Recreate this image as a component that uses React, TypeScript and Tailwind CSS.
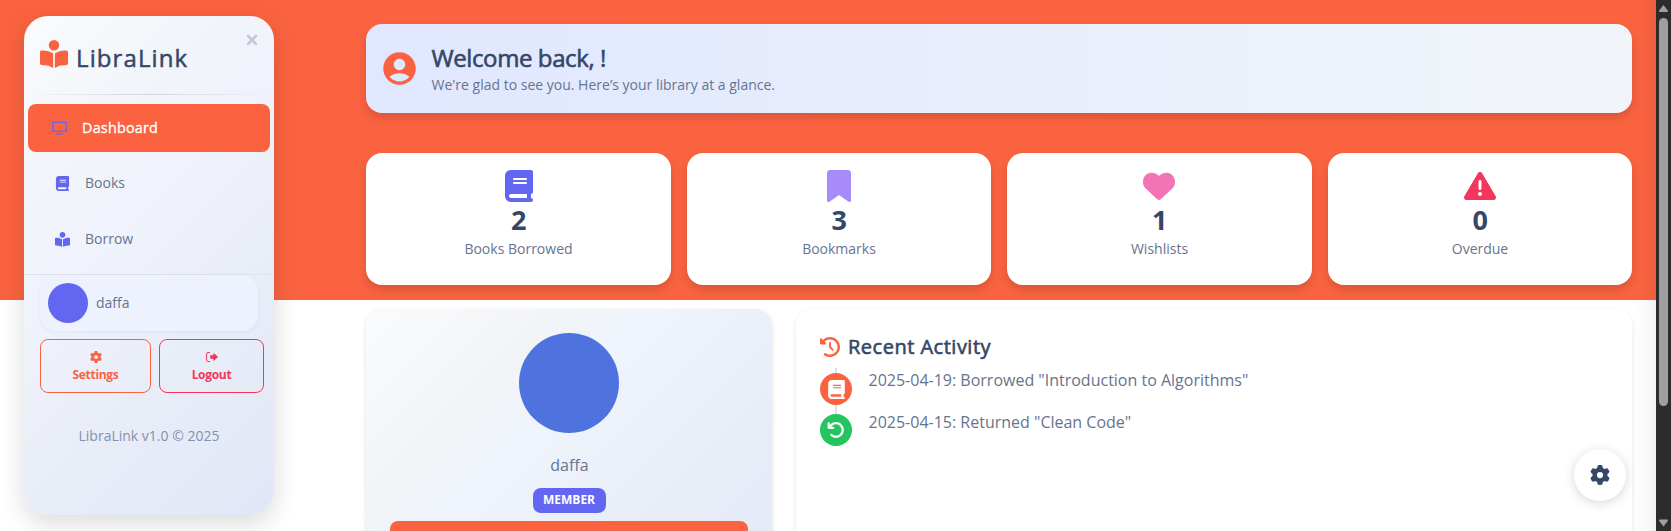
import React from "react";
import {
  FaArrowRotateLeft,
  FaBook,
  FaBookmark,
  FaBookOpenReader,
  FaClockRotateLeft,
  FaGear,
  FaHeart,
  FaTriangleExclamation,
  FaXmark,
} from "react-icons/fa6";
import { MdAccountCircle } from "react-icons/md";

const stats = [
  { icon: <FaBook size={32} className="ml-px text-[#6366f1]" />, value: 2, label: "Books Borrowed" },
  { icon: <FaBookmark size={32} className="text-[#a78bfa]" />, value: 3, label: "Bookmarks" },
  { icon: <FaHeart size={32} className="text-[#f472b6]" />, value: 1, label: "Wishlists" },
  { icon: <FaTriangleExclamation size={32} className="text-[#f5365c]" />, value: 0, label: "Overdue" },
];

function MonitorIcon() {
  return (
    <svg width="15" height="14" viewBox="0 0 15 14" fill="none" stroke="#6366f1" strokeOpacity="0.88">
      <path d="M.75 1.250h13.500v9H.75z" strokeWidth="1.5" />
      <path d="M4 12.900h7" strokeWidth="1.5" />
    </svg>
  );
}

function LogoutIcon() {
  return (
    <svg width="12" height="10" viewBox="0 0 12 10" fill="currentColor">
      <path d="M4 .5H2A1.400 1.400 0 0 0 .6 1.900v6.200A1.400 1.400 0 0 0 2 9.500h2" fill="none" stroke="currentColor" />
      <path d="M7.300 1.600v1.700H4.200v3.400h3.100v1.700q.3.700.9.200l3.400-3.100q.4-.5 0-1L8.200 1.400q-.6-.5-.9.200z" />
    </svg>
  );
}

function Sidebar() {
  return (
    <aside className="mt-4 ml-6 flex h-[499px] w-[250px] shrink-0 flex-col rounded-3xl bg-[linear-gradient(135deg,#fafbfd_0%,#f1f4f9_27%,#f0f3fc_40%,#e9edf7_65%,#e1e7f7_100%)] shadow-[0_8px_26px_rgba(0,0,0,0.15)]">
      <div className="flex h-[78px] justify-between">
        <div className="flex items-start pt-6 pl-4">
          <FaBookOpenReader size={28} className="text-[#fb6340]" />
          <span className="mt-0.5 ml-2 text-2xl leading-8 tracking-[1.1px] text-[#344767] [-webkit-text-stroke:0.5px]">LibraLink</span>
        </div>
        <FaXmark size={16} strokeWidth={24} stroke="currentColor" className="mt-4 mr-[14px] text-[#c0c8d6]" />
      </div>
      <div className="h-px bg-[linear-gradient(90deg,transparent,#d3d6db,transparent)]" />
      <nav className="mt-[9px] flex flex-col px-1 text-sm text-[#67748e]">
        <a className="flex h-12 items-center gap-[15px] rounded-lg bg-[#fb6340] pl-6 text-[14.4px] tracking-[0.2px] text-white [-webkit-text-stroke:0.3px]">
          <MonitorIcon />
          Dashboard
        </a>
        <a className="mt-[7px] flex h-12 items-center gap-[15px] pl-[27px]">
          <FaBook size={15} className="text-[#6366f1]" />
          Books
        </a>
        <a className="mt-2 flex h-12 items-center gap-[15px] pl-[27px]">
          <FaBookOpenReader size={15} className="text-[#6366f1]" />
          Borrow
        </a>
      </nav>
      <div className="mt-[11px] border-t border-[#dfe2e8] pl-4 text-[#67748e]">
        <div className="flex h-14 w-[218px] items-center gap-2 rounded-2xl bg-[#eef2ff] pl-2 text-sm shadow-[0_1px_4px_rgba(0,0,0,0.05)]">
          <span className="size-10 rounded-full bg-[#6366f1]" />
          daffa
        </div>
        <div className="mt-2 flex gap-2 text-xs leading-[18px] font-bold tracking-[-0.3px]">
          <button className="flex h-[54px] w-[111px] flex-col items-center rounded-lg border border-[#fb6340] pt-[11px] text-[#fb6340]">
            <FaGear size={12} />
            <span className="mt-[3px]">Settings</span>
          </button>
          <button className="flex h-[54px] w-[105px] flex-col items-center rounded-lg border border-[#f5365c] pt-3 text-[#f5365c]">
            <LogoutIcon />
            <span className="mt-1">Logout</span>
          </button>
        </div>
      </div>
      <div className="mt-8 text-center text-sm leading-[21px] text-[#8392ab]">LibraLink v1.0 © 2025</div>
    </aside>
  );
}

function Activity({ icon, text, tone, first }: { icon: React.ReactNode; text: string; tone: string; first?: boolean }) {
  return (
    <li className={first ? "flex h-[42px]" : "flex"}>
      <div className="flex w-8 flex-col items-center">
        <span className={first ? "h-[5px] w-0.5 bg-[#dee2e6]" : "h-[4px] w-0.5 bg-[#dee2e6]"} />
        <span className={`flex size-8 shrink-0 items-center justify-center rounded-full text-white ${tone}`}>{icon}</span>
        {first && <span className="w-0.5 grow bg-[#dee2e6]" />}
      </div>
      <span className="ml-[16.5px] text-base leading-6 text-[#67748e]">{text}</span>
    </li>
  );
}

export default function App() {
  return (
    <div className="flex h-[531px] overflow-hidden bg-[linear-gradient(#fb6340_300px,#fff_300px)] font-['Open_Sans',sans-serif]">
      <Sidebar />
      <main className="ml-[92px] flex w-[1266px] shrink-0 flex-col">
        <section className="mt-6 flex h-[89px] shrink-0 items-center rounded-2xl bg-[linear-gradient(90deg,#e0e7ff,#f1f5f9)] pl-[14px] shadow-[0_5px_10px_rgba(0,0,0,0.14)]">
          <MdAccountCircle size={39} className="text-[#fb6340]" />
          <div className="ml-[12.5px] pt-px">
            <h1 className="text-2xl leading-[30px] tracking-[-0.4px] text-[#344767] [-webkit-text-stroke:0.6px]">Welcome back, !</h1>
            <p className="mt-px text-sm leading-[21px] text-[#67748e]">We're glad to see you. Here’s your library at a glance.</p>
          </div>
        </section>
        <section className="mt-10 grid shrink-0 grid-cols-4 gap-4">
          {stats.map((s) => (
            <div
              key={s.label}
              className="flex h-[132px] flex-col items-center rounded-2xl bg-white pt-[17px] shadow-[0_5px_10px_rgba(0,0,0,0.14)]"
            >
              {s.icon}
              <span className="pl-px text-[27px] leading-9 font-bold text-[#344767]">{s.value}</span>
              <span className="mt-px pl-[0.5px] text-sm leading-5 text-[#67748e]">{s.label}</span>
            </div>
          ))}
        </section>
        <section className="mt-6 flex grow gap-6">
          <div className="flex h-[350px] w-[406px] shrink-0 flex-col items-center rounded-2xl bg-[linear-gradient(135deg,#fafbfd_0%,#f1f4f7_27%,#f0f4fc_36%,#e9edf7_65%,#e1e7f7_100%)] px-6 pt-6 shadow-[0_2px_5px_rgba(0,0,0,0.12)]">
            <span className="size-[100px] shrink-0 rounded-full bg-[#4e73df]" />
            <span className="mt-5 pl-px text-base leading-6 text-[#67748e]">daffa</span>
            <span className="mt-[11px] flex h-[25px] w-[73px] shrink-0 items-center justify-center rounded-lg bg-[#6366f1] pb-0.5 text-xs font-bold text-white">
              MEMBER
            </span>
            <button className="mt-2 h-10 w-full shrink-0 rounded-lg bg-[#fb6340] shadow-md" aria-label="Profile" />
          </div>
          <div className="h-[350px] grow rounded-2xl bg-white px-6 pt-6 shadow-[0_2px_5px_rgba(0,0,0,0.1)]">
            <h2 className="flex h-[27px] items-center gap-2 text-xl tracking-[0.5px] text-[#344767] [-webkit-text-stroke:0.6px]">
              <FaClockRotateLeft size={20} className="text-[#fb6340]" />
              Recent Activity
            </h2>
            <ul className="mt-2">
              <Activity first icon={<FaBook size={19} />} tone="bg-[#fb6340]" text={'2025-04-19: Borrowed "Introduction to Algorithms"'} />
              <Activity icon={<FaArrowRotateLeft size={18} />} tone="bg-[#22c55e]" text={'2025-04-15: Returned "Clean Code"'} />
            </ul>
          </div>
        </section>
      </main>
      <div className="w-6 shrink-0 bg-[linear-gradient(90deg,transparent,rgba(0,0,0,0.015)_50%,rgba(0,0,0,0.05))]" />
      <div className="flex h-full w-[15px] shrink-0 flex-col items-center bg-[#2c2c2c]">
        <svg width="9" height="8" viewBox="0 0 9 8" className="mt-[5px]" fill="#9f9f9f">
          <path d="M4.500 0 8.800 5.500Q9.200 7 8 7H1Q-.2 7 .2 5.500z" />
        </svg>
        <div className="mt-[5px] h-[388px] w-[9px] rounded-full bg-[#9f9f9f]" />
        <svg width="9" height="8" viewBox="0 0 9 8" className="mt-auto mb-1" fill="#9f9f9f">
          <path d="M4.500 7.500 8.800 2Q9.200.500 8 .500H1Q-.2.500.2 2z" />
        </svg>
      </div>
      <button
        aria-label="Configure"
        className="absolute top-[449px] left-[1574px] flex size-[52px] items-center justify-center rounded-full bg-white text-[#344767] shadow-[0_2px_12px_rgba(0,0,0,0.16)]"
      >
        <FaGear size={20} />
      </button>
    </div>
  );
}
